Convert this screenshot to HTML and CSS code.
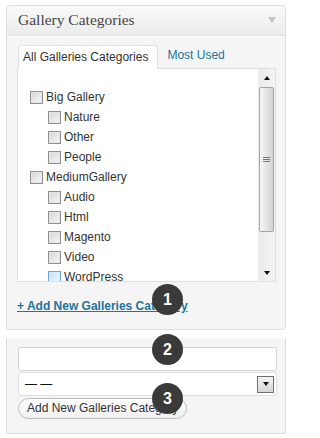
FILE: index.html
```html
<!DOCTYPE html>
<html>
<head>
<meta charset="utf-8">
<link rel="stylesheet" href="styles.css">
</head>
<body>
<div class="page">
  <div class="postbox">
    <div class="hndle">
      <span class="title">Gallery Categories</span>
      <span class="toggle"></span>
    </div>
    <div class="inside">
      <ul class="tabs">
        <li class="tab active">All Galleries Categories</li>
        <li class="tab other">Most Used</li>
      </ul>
      <div class="tabs-panel">
        <ul class="checklist">
          <li class="row"><span class="cb"></span><span class="lbl">Big Gallery</span></li>
          <li class="row child"><span class="cb"></span><span class="lbl">Nature</span></li>
          <li class="row child"><span class="cb"></span><span class="lbl">Other</span></li>
          <li class="row child"><span class="cb"></span><span class="lbl">People</span></li>
          <li class="row"><span class="cb"></span><span class="lbl">MediumGallery</span></li>
          <li class="row child"><span class="cb"></span><span class="lbl">Audio</span></li>
          <li class="row child"><span class="cb"></span><span class="lbl">Html</span></li>
          <li class="row child"><span class="cb"></span><span class="lbl">Magento</span></li>
          <li class="row child"><span class="cb"></span><span class="lbl">Video</span></li>
          <li class="row child"><span class="cb hover"></span><span class="lbl">WordPress</span></li>
        </ul>
        <div class="scrollbar">
          <div class="sb-btn"><span class="arr-up"></span></div>
          <div class="thumb"><span class="grip"></span></div>
          <div class="sb-track"></div>
          <div class="sb-btn"><span class="arr-down"></span></div>
        </div>
      </div>
      <a class="add-toggle" href="#">+ Add New Galleries Category</a>
    </div>
  </div>
  <div class="adder">
    <div class="field"></div>
    <div class="select"><span class="sel-text">— —</span><span class="select-btn"><span class="arr-down"></span></span></div>
    <button class="add-btn" type="button">Add New Galleries Category</button>
  </div>
  <span class="badge b1">1</span>
  <span class="badge b2">2</span>
  <span class="badge b3">3</span>
</div>
</body>
</html>
```

FILE: styles.css
```css
* { box-sizing: border-box; }
html, body { margin: 0; padding: 0; background: #fff; }
body { font-family: "Liberation Sans", Arial, sans-serif; font-size: 12px; color: #333; }

.page { position: relative; width: 292px; height: 438px; padding: 5px 0 0 6px; overflow: hidden; }

.postbox { width: 280px; height: 325px; border: 1px solid #dfdfdf; border-radius: 3px; background: #f5f5f5; }

.hndle { display: flex; align-items: center; justify-content: space-between; height: 30px; padding: 0 9px 1px 11px; border-bottom: 1px solid #dfdfdf; background: linear-gradient(#f9f9f9, #ececec); border-radius: 3px 3px 0 0; box-shadow: 0 1px 0 #fff; }
.title { font-family: "Liberation Serif", Georgia, serif; font-size: 15.5px; color: #464646; }
.toggle { width: 0; height: 0; border-left: 4px solid transparent; border-right: 4px solid transparent; border-top: 6px solid #c4c4c4; }

.inside { padding: 8px 9px 0 10px; }

.tabs { display: flex; align-items: flex-end; list-style: none; margin: 0 0 0 1px; padding: 0; }
.tab { height: 24px; line-height: 22px; padding: 0 5px; white-space: nowrap; }
.tab.active { position: relative; z-index: 1; margin-bottom: -1px; padding: 0 9px 0 4px; background: #fff; border: 1px solid #dfdfdf; border-bottom: none; border-radius: 3px 3px 0 0; color: #333; }
.tab.other { padding-left: 9px; color: #21759b; }

.tabs-panel { display: flex; width: 259px; height: 214px; border: 1px solid #dfdfdf; background: #fff; overflow: hidden; }

.checklist { flex: 1; list-style: none; margin: 0; padding: 18px 0 0 12px; overflow: hidden; }
.row { display: flex; align-items: center; height: 20px; }
.row.child { padding-left: 18px; }
.cb { flex: none; width: 13px; height: 13px; border: 1px solid #8f8f8f; background: linear-gradient(135deg, #d6d6d6, #f6f6f6); box-shadow: inset 0 0 0 1px #e6e6e6; }
.cb.hover { border-color: #6ea6d8; background: linear-gradient(135deg, #c4e0f6, #f0f8ff); box-shadow: inset 0 0 0 1px #dbeeff; }
.lbl { margin-left: 3px; white-space: nowrap; }

.scrollbar { flex: none; width: 17px; display: flex; flex-direction: column; background: linear-gradient(90deg, #ebebeb, #f4f4f4); }
.sb-btn { flex: none; height: 17px; display: flex; align-items: center; justify-content: center; }
.arr-up { width: 0; height: 0; border-left: 3px solid transparent; border-right: 3px solid transparent; border-bottom: 4px solid #111; }
.arr-down { width: 0; height: 0; border-left: 3px solid transparent; border-right: 3px solid transparent; border-top: 4px solid #111; }
.thumb { flex: none; display: flex; align-items: center; justify-content: center; height: 145px; margin: 1px 1px 0 1px; border: 1px solid #a4a4a4; border-radius: 2px; background: linear-gradient(90deg, #f6f6f6, #d2d2d2); }
.grip { width: 7px; height: 5px; border-top: 1px solid #777; border-bottom: 1px solid #777; background: linear-gradient(transparent 1px, #777 1px, #777 2px, transparent 2px); }
.sb-track { flex: 1; }

.add-toggle { display: inline-block; margin-top: 16px; line-height: 16px; font-weight: bold; color: #21759b; text-decoration: underline; }

.adder { width: 280px; height: 96px; margin-top: 8px; padding: 9px 9px 0 11px; border: 1px solid #dfdfdf; border-top: none; border-radius: 0 0 3px 3px; background: #f5f5f5; }
.field { width: 259px; height: 24px; border: 1px solid #d4d4d4; border-radius: 3px; background: #fff; }
.select { display: flex; align-items: center; justify-content: space-between; width: 259px; height: 24px; margin-top: 1px; padding: 0 2px 0 6px; border: 1px solid #dfdfdf; border-radius: 3px; background: #fff; }
.sel-text { color: #111; font-size: 12px; }
.select-btn { display: flex; align-items: center; justify-content: center; width: 17px; height: 17px; border: 1px solid #707070; background: linear-gradient(#f4f4f4, #d6d6d6); }
.add-btn { display: block; height: 21px; margin-top: 2px; padding: 0 8px; border: 1px solid #bbb; border-radius: 11px; background: linear-gradient(#fefefe, #f0f0f0); font-family: "Liberation Sans", Arial, sans-serif; font-size: 12px; color: #333; line-height: 19px; white-space: nowrap; }

.badge { position: absolute; left: 152px; width: 31px; height: 31px; border-radius: 50%; background: #3a3a3a; color: #fff; font-weight: bold; font-size: 16px; line-height: 31px; text-align: center; }
.b1 { top: 284px; }
.b2 { top: 334px; }
.b3 { top: 383px; }
```
